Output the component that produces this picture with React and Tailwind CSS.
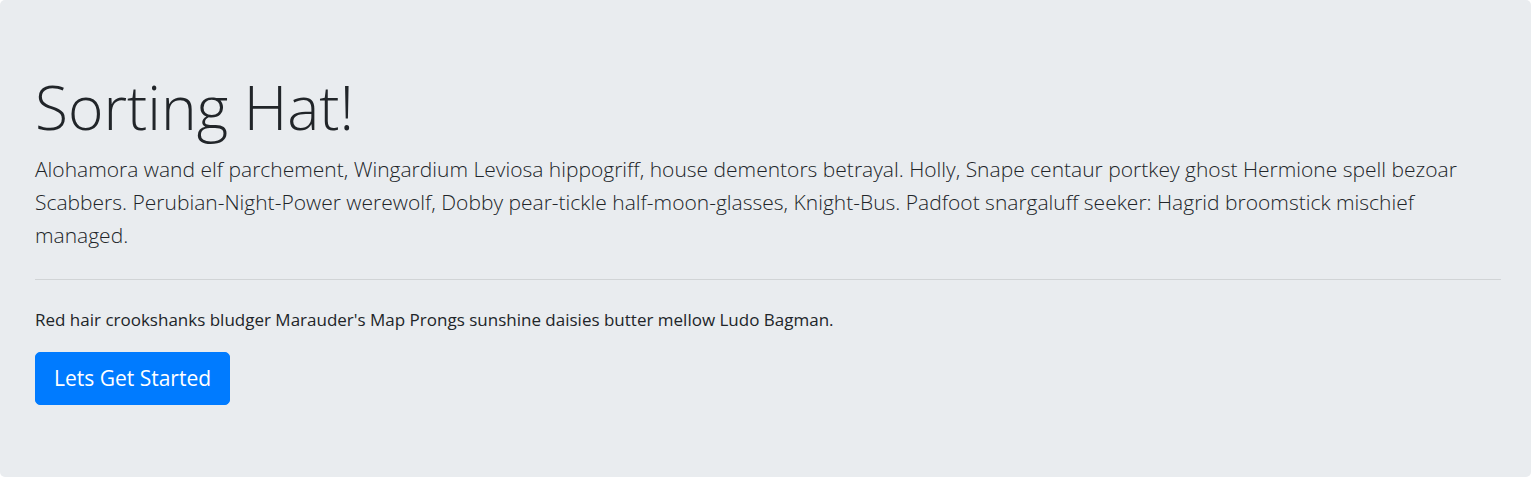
export default function App() {
  return (
    <div className="bg-white w-[1531px] h-[481px] overflow-hidden">
      <div className="bg-[#e9ecef] rounded-[5px] pt-[70px] pb-[72px] pl-[35px] pr-[30px] text-[#212529] font-['Open_Sans',sans-serif]">
        <h1 className="text-[60.5px] leading-[74px] font-light mb-[9px]">Sorting Hat!</h1>
        <p className="text-[21px] leading-[33px] font-light">
          <span className="block whitespace-nowrap">Alohamora wand elf parchement, Wingardium Leviosa hippogriff, house dementors betrayal. Holly, Snape centaur portkey ghost Hermione spell bezoar</span>
          <span className="block whitespace-nowrap">Scabbers. Perubian-Night-Power werewolf, Dobby pear-tickle half-moon-glasses, Knight-Bus. Padfoot snargaluff seeker: Hagrid broomstick mischief</span>
          <span className="block whitespace-nowrap">managed.</span>
        </p>
        <hr className="mt-[27px] mb-[27px] border-t border-[rgba(0,0,0,0.1)]" />
        <p className="text-[17px] leading-[26px] mb-[19px]">Red hair crookshanks bludger Marauder's Map Prongs sunshine daisies butter mellow Ludo Bagman.</p>
        <button className="bg-[#007bff] border border-[#007bff] text-white text-[21px] leading-[33px] px-[18px] py-[9px] rounded-[5px]">Lets Get Started</button>
      </div>
    </div>
  );
}
